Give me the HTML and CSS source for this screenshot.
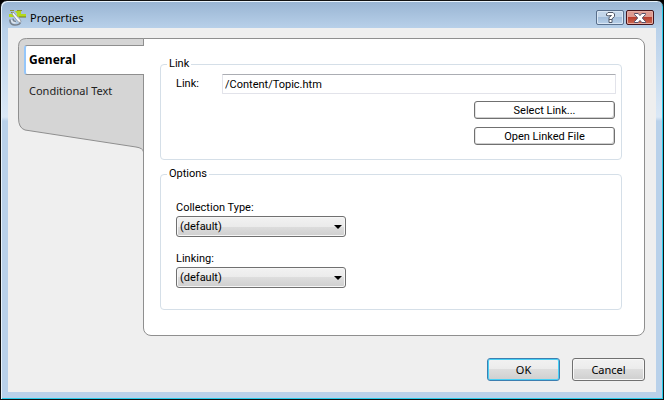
FILE: index.html
```html
<!DOCTYPE html>
<html lang="en">
<head>
<meta charset="utf-8">
<meta name="viewport" content="width=device-width, initial-scale=1">
<title>Properties</title>
<link rel="stylesheet" href="styles.css">
</head>
<body>
<div class="window" role="dialog" aria-labelledby="title">
  <header class="titlebar">
    <svg class="app-icon" width="17" height="17" viewBox="0 0 17 17" aria-hidden="true">
      <path d="M1 1.500h4M8 1.500h5M2 3.500h3" stroke="#8b9132"/>
      <path d="M6 2h6v4H9z" fill="#b4d91a"/>
      <path d="M0 6.500h5M8 6.500h9" stroke="#b4d91a" stroke-width="3"/>
      <path d="M10 8h7" stroke="#727b25"/>
      <path d="M1 10.500v1.500q.5 4 5 4 4.500 0 5.500-2.500" fill="none" stroke="#777f89" stroke-width="1.600"/>
      <path d="M2.500 11q.5 3 4 3" fill="none" stroke="#e3e7ec" stroke-width="1.400"/>
      <path d="M4 9.500q0 3 3 3" fill="none" stroke="#777f89" stroke-width="1.200"/>
      <path d="M4 3l7.500 8q1 2-.5 2.500-1.500 0-2.500-1.500L3 5z" fill="#f4f6f9" stroke="#8a9099" stroke-width=".8"/>
    </svg>
    <h1 class="title" id="title">Properties</h1>
    <button class="caption-button" type="button" aria-label="Help">
      <svg width="9" height="11" viewBox="0 0 9 11" aria-hidden="true">
        <path d="M.5 3.500V2l1.500-1.500h5L8.500 2v2.500L6 6.800V10.500H3V5.500l2.500-2H3.500v.5z" fill="#fff" stroke="#505868"/>
        <path d="M3 7.500h3" stroke="#505868"/>
      </svg>
    </button>
    <button class="caption-button close" type="button" aria-label="Close">
      <svg width="12" height="10" viewBox="0 0 12 10" aria-hidden="true">
        <path d="M.5.5h3.700L6 2.600 7.800.5h3.700v1L8.300 5l3.200 3.500v1H7.800L6 7.400 4.200 9.500H.5v-1L3.700 5 .5 1.500z" fill="#fff" stroke="#55506a"/>
      </svg>
    </button>
  </header>
  <form class="dialog">
    <div class="content">
      <nav class="tabs" aria-label="Pages">
        <svg class="tabs-shape" viewBox="0 0 126 115" preserveAspectRatio="none" aria-hidden="true">
          <path d="M125.500.5H8.500Q.5.500.5 8.500V80q0 10 6.500 12L118 109q7 1 7.500 5z" fill="#d5d5d5" stroke="#8f8f8f"/>
        </svg>
        <a class="tab active" href="#general" aria-current="page">General</a>
        <a class="tab" href="#conditional">Conditional Text</a>
      </nav>
      <main class="panel" id="general">
        <fieldset class="group">
          <legend>Link</legend>
          <div class="field-row">
            <label for="link">Link:</label>
            <input class="text-box" id="link" type="text" value="/Content/Topic.htm">
          </div>
          <div class="link-actions">
            <button class="small-button" type="button">Select Link...</button>
            <button class="small-button" type="button">Open Linked File</button>
          </div>
        </fieldset>
        <fieldset class="group options">
          <legend>Options</legend>
          <label for="collection">Collection Type:</label>
          <div class="select-box">
            <select id="collection"><option>(default)</option></select>
          </div>
          <label for="linking">Linking:</label>
          <div class="select-box">
            <select id="linking"><option>(default)</option></select>
          </div>
        </fieldset>
      </main>
    </div>
    <footer class="actions">
      <button class="button primary" type="submit">OK</button>
      <button class="button" type="button">Cancel</button>
    </footer>
  </form>
</div>
</body>
</html>
```
FILE: styles.css
```css
* {
  box-sizing: border-box;
}

body {
  margin: 0;
  background: #000;
  color: #000;
  font: 11px/16px "Noto Sans", "Open Sans", sans-serif;
}

button, input, select {
  font: inherit;
  color: inherit;
}

.window {
  display: flex;
  flex-direction: column;
  min-height: 100vh;
  padding: 0 6px 7px;
  border: 1px solid #111;
  border-radius: 7px 7px 0 0;
  background: linear-gradient(#98b4d2 0, #b9d1ea 28px, #dbe8f6 116px, #b9d1ea 120px);
  box-shadow: inset 1px 1px #e8f3fc, inset -1px -1px #27cbea;
}

.titlebar {
  display: flex;
  align-items: center;
  height: 27px;
  padding: 6px 3px 0 2px;
}

.app-icon {
  margin: 0 4px 0 0;
}

.title {
  flex: 1;
  margin: 0;
  font-size: 11px;
  font-weight: 400;
}

.caption-button {
  display: flex;
  align-items: center;
  justify-content: center;
  width: 28px;
  height: 15px;
  margin-left: 2px;
  padding: 0;
  border: 1px solid #596f8c;
  border-radius: 2px;
  background: linear-gradient(#c3d6ea 50%, #a3bedb 50%, #b9d1ea);
  box-shadow: inset 0 0 0 1px #d9e6f4;
}

.caption-button.close {
  border-color: #45141b;
  background: linear-gradient(#dd9a90 45%, #b83b2b 45%, #cb6a54);
  box-shadow: inset 0 0 0 1px #e5aea5;
}

.dialog {
  flex: 1;
  display: flex;
  flex-direction: column;
  margin: 0 1px;
  padding: 10px 11px 11px 10px;
  background: #efefef;
}

.content {
  flex: 1;
  display: flex;
}

.tabs {
  position: relative;
  width: 125px;
  padding: 7px 0 0 6px;
}

.tabs-shape {
  position: absolute;
  top: 0;
  left: 0;
  width: 126px;
  height: 115px;
}

.tab {
  position: relative;
  display: block;
  padding: 8px 5px;
  color: #222;
  font-size: 11px;
  text-decoration: none;
}

.tab.active {
  z-index: 1;
  margin-right: -1px;
  padding: 6px 3px;
  border: 1px solid #8f8f8f;
  border-right: 0;
  border-left: 2px solid #94c6fa;
  border-radius: 3px 0 0 3px;
  background: #fff;
  color: #000;
  font-size: 12px;
  font-weight: 700;
}

.panel {
  flex: 1;
  padding: 17px 22px 25px 16px;
  border: 1px solid #8f8f8f;
  border-radius: 0 8px 8px 8px;
  background: #fff;
  font-family: Roboto, "Noto Sans", sans-serif;
}

.group {
  min-width: 0;
  margin: 0;
  padding: 2px 5px 14px 15px;
  border: 1px solid #d5dfe8;
  border-radius: 4px;
}

.group legend {
  margin-left: -9px;
  padding: 0 2px;
}

.field-row {
  display: flex;
  align-items: center;
}

.field-row label {
  width: 46px;
}

.text-box {
  flex: 1;
  min-width: 0;
  height: 20px;
  padding: 0 2px;
  border: 1px solid #e2e3ea;
  border-top-color: #abadb3;
  border-radius: 1px;
  background: #fff;
}

.link-actions {
  display: flex;
  flex-direction: column;
  align-items: flex-end;
  gap: 8px;
  padding: 7px 1px 0 0;
}

.small-button {
  width: 141px;
  height: 18px;
  padding: 1px 0 0;
  border: 1px solid #707070;
  border-radius: 3px;
  background: #fff;
  box-shadow: inset -1px -1px #cfcfcf, inset 1px 0 #e5e5e5;
  line-height: 15px;
}

.options {
  margin-top: 6px;
  padding-top: 18px;
  padding-bottom: 21px;
}

.options label {
  display: block;
}

.select-box {
  position: relative;
  width: 170px;
}

.select-box + label {
  margin-top: 14px;
}

.select-box::after {
  content: "";
  position: absolute;
  top: 9px;
  right: 4px;
  border: 4px solid transparent;
  border-top-color: #000;
  border-bottom: 0;
  pointer-events: none;
}

.select-box select {
  display: block;
  appearance: none;
  width: 100%;
  height: 21px;
  padding: 1px 20px 0 3px;
  border: 1px solid #707070;
  border-radius: 3px;
  background: linear-gradient(#f2f2f2, #ebebeb 50%, #ddd 50%, #cfcfcf);
  box-shadow: inset 0 0 0 1px #f6f6f6;
}

.actions {
  display: flex;
  justify-content: flex-end;
  gap: 12px;
  padding-top: 22px;
}

.button {
  width: 73px;
  height: 23px;
  padding: 0;
  border: 1px solid #707070;
  border-radius: 3px;
  background: linear-gradient(#f2f2f2, #ebebeb 50%, #ddd 50%, #cfcfcf);
  box-shadow: inset 0 0 0 1px #f8f8f8;
}

.button.primary {
  border-color: #3c7fb1;
  box-shadow: inset 0 0 0 1px #48d0f5;
}
```
